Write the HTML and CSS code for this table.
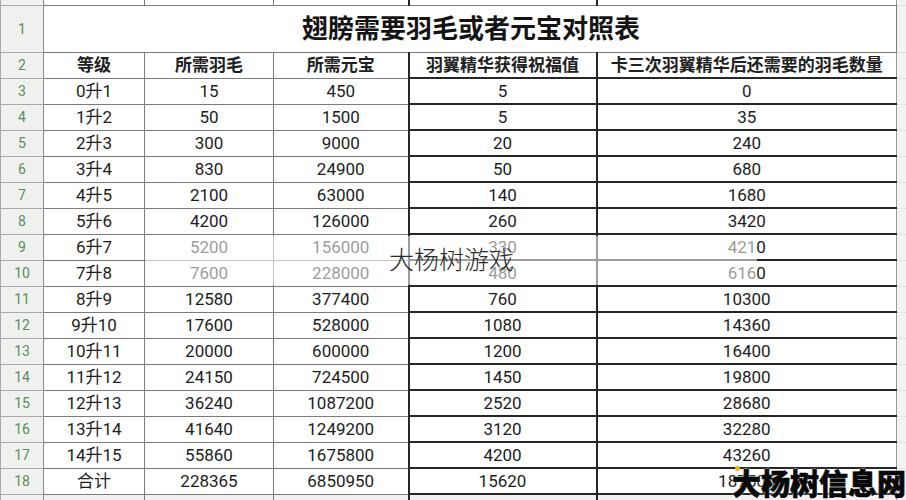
FILE: index.html
```html
<!DOCTYPE html>
<html lang="zh-CN">
<head>
<meta charset="utf-8">
<title>翅膀需要羽毛或者元宝对照表</title>
<link rel="stylesheet" href="styles.css">
</head>
<body>
<div class="sheet">
  <table class="grid">
    <colgroup>
      <col class="c-rh"><col class="c-a"><col class="c-b"><col class="c-c"><col class="c-d"><col class="c-e"><col class="c-g">
    </colgroup>
    <tr class="r-top"><th class="rh"></th><td></td><td></td><td></td><td></td><td></td><td class="g"></td></tr>
    <tr class="r-title"><th class="rh">1</th><td colspan="5" class="title">翅膀需要羽毛或者元宝对照表</td><td class="g"></td></tr>
    <tr class="r-head"><th class="rh">2</th><td>等级</td><td>所需羽毛</td><td>所需元宝</td><td>羽翼精华获得祝福值</td><td>卡三次羽翼精华后还需要的羽毛数量</td><td class="g"></td></tr>
    <tr><th class="rh">3</th><td>0升1</td><td>15</td><td>450</td><td>5</td><td>0</td><td class="g"></td></tr>
    <tr><th class="rh">4</th><td>1升2</td><td>50</td><td>1500</td><td>5</td><td>35</td><td class="g"></td></tr>
    <tr><th class="rh">5</th><td>2升3</td><td>300</td><td>9000</td><td>20</td><td>240</td><td class="g"></td></tr>
    <tr><th class="rh">6</th><td>3升4</td><td>830</td><td>24900</td><td>50</td><td>680</td><td class="g"></td></tr>
    <tr><th class="rh">7</th><td>4升5</td><td>2100</td><td>63000</td><td>140</td><td>1680</td><td class="g"></td></tr>
    <tr><th class="rh">8</th><td>5升6</td><td>4200</td><td>126000</td><td>260</td><td>3420</td><td class="g"></td></tr>
    <tr><th class="rh">9</th><td>6升7</td><td>5200</td><td>156000</td><td>330</td><td>4210</td><td class="g"></td></tr>
    <tr><th class="rh">10</th><td>7升8</td><td>7600</td><td>228000</td><td>480</td><td>6160</td><td class="g"></td></tr>
    <tr><th class="rh">11</th><td>8升9</td><td>12580</td><td>377400</td><td>760</td><td>10300</td><td class="g"></td></tr>
    <tr><th class="rh">12</th><td>9升10</td><td>17600</td><td>528000</td><td>1080</td><td>14360</td><td class="g"></td></tr>
    <tr><th class="rh">13</th><td>10升11</td><td>20000</td><td>600000</td><td>1200</td><td>16400</td><td class="g"></td></tr>
    <tr><th class="rh">14</th><td>11升12</td><td>24150</td><td>724500</td><td>1450</td><td>19800</td><td class="g"></td></tr>
    <tr><th class="rh">15</th><td>12升13</td><td>36240</td><td>1087200</td><td>2520</td><td>28680</td><td class="g"></td></tr>
    <tr><th class="rh">16</th><td>13升14</td><td>41640</td><td>1249200</td><td>3120</td><td>32280</td><td class="g"></td></tr>
    <tr><th class="rh">17</th><td>14升15</td><td>55860</td><td>1675800</td><td>4200</td><td>43260</td><td class="g"></td></tr>
    <tr><th class="rh">18</th><td>合计</td><td>228365</td><td>6850950</td><td>15620</td><td>187505</td><td class="g"></td></tr>
    <tr class="r-tail"><th class="rh"></th><td></td><td></td><td></td><td></td><td></td><td class="g"></td></tr>
  </table>
  <div class="fade"></div>
  <div class="wm-mid">大杨树游戏</div>
  <div class="wm-corner"><span class="spark"></span>大杨树信息网</div>
</div>
</body>
</html>
```

FILE: styles.css
```css
* { box-sizing: border-box; }
html, body { margin: 0; padding: 0; background: #ffffff; }
body {
  width: 906px;
  height: 500px;
  overflow: hidden;
  font-family: Roboto, "Noto Sans CJK SC", sans-serif;
  color: #1c1c1c;
}
.sheet {
  position: relative;
  width: 906px;
  height: 500px;
  overflow: hidden;
}
.grid {
  border-collapse: collapse;
  table-layout: fixed;
  width: 906px;
}
.c-rh { width: 43px; }
.c-a { width: 101px; }
.c-b { width: 129px; }
.c-c { width: 135px; }
.c-d { width: 188px; }
.c-e { width: 300px; }
.c-g { width: 10px; }

.grid tr { height: 26px; }
.grid td, .grid th {
  padding: 0;
  border: 1px solid #7c7c7c;
  text-align: center;
  vertical-align: middle;
  font-size: 17px;
  font-weight: 400;
  white-space: nowrap;
  overflow: hidden;
  line-height: 20px;
}
.grid td:nth-child(5),
.grid td:nth-child(6) {
  border-top: 2px solid #262626;
  border-bottom: 2px solid #262626;
  border-left: 2px solid #262626;
}
.grid td:nth-child(6) { border-right: 1px solid #9a9a9a; }

.grid .rh {
  background: #eff1ef;
  color: #5b8d5b;
  font-size: 14px;
  border-color: #a9a9a9;
  border-right: 1px solid #8a8a8a;
}
.grid .g {
  background: #f3f3f3;
  border-top-color: #e2e2e2;
  border-bottom-color: #e2e2e2;
  border-right: none;
}

.r-top { height: 5px !important; }
.r-top td, .r-top th { line-height: 0; border-top: none; }
.r-top td:nth-child(5), .r-top td:nth-child(6) { border-top: none; border-bottom: 1px solid #7c7c7c; }

.r-title { height: 47px !important; }
.grid .title {
  font-size: 26px;
  font-weight: 700;
  color: #141414;
  border-top-width: 1px;
  border-top-color: #7c7c7c;
  border-left: 1px solid #7c7c7c;
  padding-left: 2px;
}
.r-head td { font-weight: 700; color: #202020; }
.r-head td:nth-child(5), .r-head td:nth-child(6) { border-top: 1px solid #7c7c7c; }

.r-tail td { background: #f1f1f1; border-bottom: none; }
.r-tail td:nth-child(5), .r-tail td:nth-child(6) { border-bottom: none; }

.fade {
  position: absolute;
  left: 146px;
  top: 236px;
  width: 611px;
  height: 49px;
  background: rgba(255, 255, 255, 0.55);
}
.wm-mid {
  position: absolute;
  left: 389px;
  top: 241px;
  font-family: "Noto Sans CJK SC", sans-serif;
  font-size: 25px;
  font-weight: 300;
  line-height: 34px;
  color: #2a2a2a;
}
.wm-corner {
  position: absolute;
  left: 732px;
  top: 463px;
  font-family: "Noto Sans CJK SC", sans-serif;
  font-size: 29px;
  font-weight: 900;
  line-height: 38px;
  color: #0a0a0a;
  letter-spacing: 0;
  -webkit-text-stroke: 0.6px #000;
  text-shadow: 0 0 2px #fff, 0 0 2px #fff;
}
.spark {
  position: absolute;
  left: 3px;
  top: 3px;
  width: 5px;
  height: 5px;
  border-radius: 50%;
  background: #f0b020;
}
```
